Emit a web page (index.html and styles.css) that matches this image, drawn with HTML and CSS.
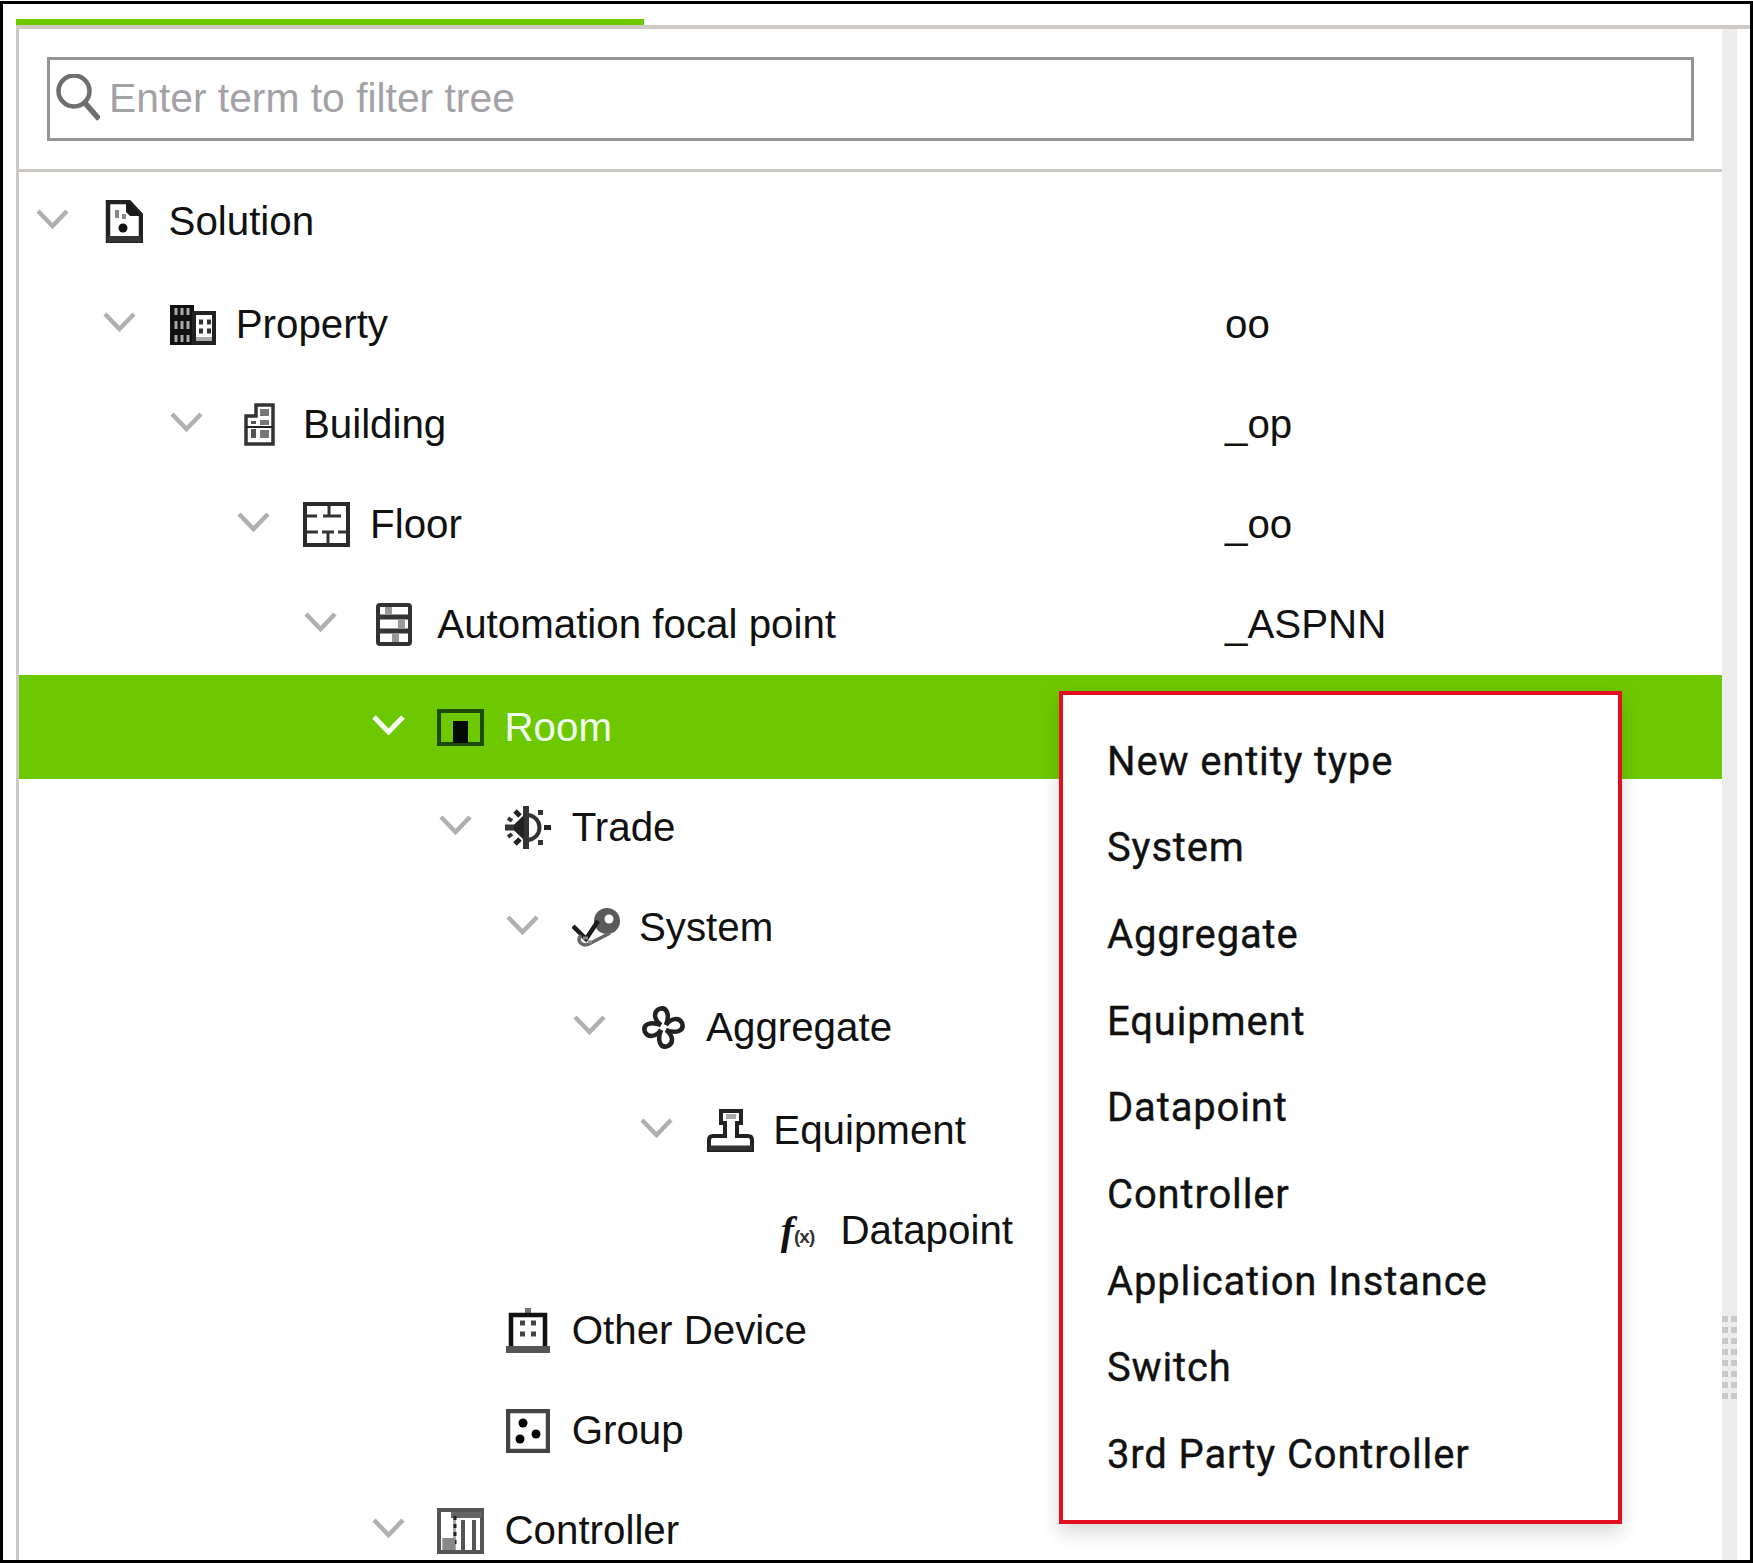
FILE: index.html
```html
<!DOCTYPE html>
<html lang="en">
<head>
<meta charset="utf-8">
<title>Tree</title>
<link rel="stylesheet" href="styles.css">
</head>
<body>
<div class="frame">
  <div class="tab"></div>
  <div class="panel">
    <div class="main">
      <div class="search">
        <svg class="search-icon" viewBox="0 0 46 47"><circle cx="20" cy="17" r="15.500" fill="none" stroke="#6e6e6e" stroke-width="4.500"/><path d="M31 29L45 45" stroke="#6e6e6e" stroke-width="5.500" fill="none"/></svg>
        <input class="search-input" type="text" placeholder="Enter term to filter tree">
      </div>
      <div class="tree">
        <div class="row">
          <div class="node l0"><span class="chev"><svg viewBox="0 0 33 20"><path d="M2 2L16.500 17L31 2"/></svg></span><span class="icon icon-left">
            <svg width="38" height="43" viewBox="0 0 38 43"><path d="M3 2H24L36 15V41H3Z" fill="#fff" stroke="#222" stroke-width="4.500"/><path d="M21 1L37 16H25L21 12Z" fill="#1a1a1a"/><rect x="10" y="10" width="4" height="8" fill="#888"/><rect x="17" y="14" width="4" height="5" fill="#888"/><circle cx="18" cy="28" r="4.500" fill="#111"/><rect x="2" y="36" width="34" height="6" fill="#333"/></svg>
          </span><span class="label">Solution</span></div>
          <span class="value"></span>
        </div>
        <div class="row">
          <div class="node l1"><span class="chev"><svg viewBox="0 0 33 20"><path d="M2 2L16.500 17L31 2"/></svg></span><span class="icon">
            <svg width="46" height="40" viewBox="0 0 46 40"><rect x="0" y="0" width="24" height="40" fill="#111"/><path d="M6 3V10M12 3V10M18 3V10M6 16V24M12 16V24M18 16V24M6 30V37M12 30V37M18 30V37" stroke="#aaa" stroke-width="3"/><rect x="24" y="8" width="20" height="30" fill="#fff" stroke="#222" stroke-width="4"/><path d="M29 17h4M37 17h4M29 26h4M37 26h4" stroke="#333" stroke-width="5"/><rect x="26" y="32" width="16" height="4" fill="#aaa"/></svg>
          </span><span class="label">Property</span></div>
          <span class="value">oo</span>
        </div>
        <div class="row">
          <div class="node l2"><span class="chev"><svg viewBox="0 0 33 20"><path d="M2 2L16.500 17L31 2"/></svg></span><span class="icon">
            <svg width="31" height="43" viewBox="0 0 31 43"><path d="M2 41V13H12V2H29V41Z" fill="#fff" stroke="#333" stroke-width="3.500"/><path d="M16 6h9v7h-9zM16 17h9v5h-9zM16 27h9v8h-9z" fill="#777"/><path d="M7 18h5v3h-5zM7 26h5v9h-5z" fill="#555"/><path d="M2 24H29" stroke="#222" stroke-width="2"/></svg>
          </span><span class="label">Building</span></div>
          <span class="value">_op</span>
        </div>
        <div class="row">
          <div class="node l3"><span class="chev"><svg viewBox="0 0 33 20"><path d="M2 2L16.500 17L31 2"/></svg></span><span class="icon icon-floor">
            <svg width="47" height="45" viewBox="0 0 47 45"><rect x="2" y="2" width="43" height="41" fill="#fff" stroke="#2a2a2a" stroke-width="4"/><path d="M4 14H14M20 14H38M26 4V14M4 30H15M19 30H31M35 30H44M25 30V42" fill="none" stroke="#333" stroke-width="3"/></svg>
          </span><span class="label">Floor</span></div>
          <span class="value">_oo</span>
        </div>
        <div class="row">
          <div class="node l4"><span class="chev"><svg viewBox="0 0 33 20"><path d="M2 2L16.500 17L31 2"/></svg></span><span class="icon">
            <svg width="36" height="43" viewBox="0 0 36 43"><rect x="2" y="2" width="32" height="39" rx="2" fill="#fff" stroke="#333" stroke-width="4"/><path d="M3 14H33M3 28H33" stroke="#333" stroke-width="5"/><rect x="9" y="4" width="7" height="7" fill="#999"/><rect x="22" y="17" width="7" height="8" fill="#999"/><rect x="16" y="31" width="7" height="8" fill="#999"/></svg>
          </span><span class="label">Automation focal point</span></div>
          <span class="value">_ASPNN</span>
        </div>
        <div class="row selected">
          <div class="node l5"><span class="chev"><svg viewBox="0 0 33 20"><path d="M2 2L16.500 17L31 2"/></svg></span><span class="icon icon-floor">
            <svg width="47" height="37" viewBox="0 0 47 37"><rect x="2" y="2" width="43" height="33" fill="none" stroke="#1c4a00" stroke-width="4"/><rect x="16" y="12" width="15" height="22" fill="#050a00"/></svg>
          </span><span class="label">Room</span></div>
          <span class="value"></span>
        </div>
        <div class="row after-selected">
          <div class="node l6"><span class="chev"><svg viewBox="0 0 33 20"><path d="M2 2L16.500 17L31 2"/></svg></span><span class="icon">
            <svg width="47" height="43" viewBox="0 0 47 43"><path d="M22 9A12.500 12.500 0 0 1 22 34" fill="none" stroke="#333" stroke-width="4"/><path d="M21 0V43" stroke="#333" stroke-width="6"/><path d="M19 9L6 21.500L19 34Z" fill="#222"/><path d="M0 21.500H9" stroke="#333" stroke-width="6"/><path d="M10 5L15 10M10 38L15 33" stroke="#222" stroke-width="5"/><path d="M3 12L7 15M3 31L7 28" stroke="#333" stroke-width="4"/><rect x="33" y="4" width="5" height="5" fill="#333"/><rect x="33" y="34" width="5" height="5" fill="#333"/><rect x="39" y="19" width="7" height="5" fill="#222"/></svg>
          </span><span class="label">Trade</span></div>
          <span class="value"></span>
        </div>
        <div class="row">
          <div class="node l7"><span class="chev"><svg viewBox="0 0 33 20"><path d="M2 2L16.500 17L31 2"/></svg></span><span class="icon">
            <svg width="48" height="39" viewBox="0 0 48 39"><circle cx="35" cy="13" r="13" fill="#5a5a5a"/><circle cx="37" cy="11" r="4.500" fill="#fff"/><path d="M1 18L14 31L26 13" fill="none" stroke="#1c1c1c" stroke-width="4.500"/><path d="M9 27C4 33 10 39 17 36L38 25" fill="none" stroke="#666" stroke-width="3.500"/><path d="M11 30h5M16 34h4" stroke="#888" stroke-width="3"/></svg>
          </span><span class="label">System</span></div>
          <span class="value"></span>
        </div>
        <div class="row">
          <div class="node l8"><span class="chev"><svg viewBox="0 0 33 20"><path d="M2 2L16.500 17L31 2"/></svg></span><span class="icon">
            <svg width="43" height="43" viewBox="0 0 43 43"><g fill="none" stroke="#222" stroke-width="4.500"><path d="M19 19C12 14 11 6 17 3C25 0 28 9 24 19"/><path d="M24 19C29 12 37 11 40 17C43 25 34 28 24 24"/><path d="M24 24C31 29 32 37 26 40C18 43 15 34 19 24"/><path d="M19 24C14 31 6 32 3 26C0 18 9 15 19 19"/></g></svg>
          </span><span class="label">Aggregate</span></div>
          <span class="value"></span>
        </div>
        <div class="row">
          <div class="node l9"><span class="chev"><svg viewBox="0 0 33 20"><path d="M2 2L16.500 17L31 2"/></svg></span><span class="icon">
            <svg width="47" height="43" viewBox="0 0 47 43"><path d="M18 14H14V2H34V14H30V27H41Q45 27 45 31V41H2V31Q2 27 6 27H18Z" fill="#fff" stroke="#222" stroke-width="4"/><path d="M2 39H45" stroke="#333" stroke-width="5"/><rect x="19" y="5" width="10" height="5" fill="#aaa"/></svg>
          </span><span class="label">Equipment</span></div>
          <span class="value"></span>
        </div>
        <div class="row">
          <div class="node l10"><span class="chev"></span><span class="icon fx"><span class="fx-f">f</span><span class="fx-x">(x)</span></span><span class="label">Datapoint</span></div>
          <span class="value"></span>
        </div>
        <div class="row">
          <div class="node l6"><span class="chev"></span><span class="icon icon-floor">
            <svg width="44" height="45" viewBox="0 0 44 45"><path d="M22 0V6" stroke="#777" stroke-width="6"/><path d="M5 44V7H39V44" fill="#fff" stroke="#111" stroke-width="4.500"/><rect x="0" y="38" width="44" height="7" fill="#555"/><path d="M14 15h5M25 15h5M14 26h5M25 26h5" stroke="#444" stroke-width="5"/></svg>
          </span><span class="label">Other Device</span></div>
          <span class="value"></span>
        </div>
        <div class="row">
          <div class="node l6"><span class="chev"></span><span class="icon icon-floor">
            <svg width="44" height="44" viewBox="0 0 44 44"><rect x="2" y="2" width="40" height="40" fill="#fff" stroke="#444" stroke-width="4.500"/><circle cx="17" cy="14" r="4.500" fill="#000"/><circle cx="30" cy="25" r="4.500" fill="#000"/><circle cx="14" cy="30" r="4.500" fill="#000"/></svg>
          </span><span class="label">Group</span></div>
          <span class="value"></span>
        </div>
        <div class="row">
          <div class="node l5"><span class="chev"><svg viewBox="0 0 33 20"><path d="M2 2L16.500 17L31 2"/></svg></span><span class="icon icon-floor">
            <svg width="47" height="46" viewBox="0 0 47 46"><rect x="2" y="2" width="43" height="42" fill="#fff" stroke="#555" stroke-width="4"/><path d="M14 4H44V10H14Z" fill="#666"/><path d="M16 10V30H5V42H19V10" fill="#aaa"/><path d="M18 8V36" stroke="#222" stroke-width="3" stroke-dasharray="4 4"/><path d="M26 12V42M37 12V42" stroke="#555" stroke-width="4"/><path d="M6 30h12v12H6z" fill="#888"/></svg>
          </span><span class="label">Controller</span></div>
          <span class="value"></span>
        </div>
      </div>
    </div>
    <div class="scrollbar">
      <div class="grip"><i></i><i></i><i></i><i></i><i></i><i></i><i></i><i></i><i></i><i></i><i></i><i></i><i></i><i></i><i></i><i></i></div>
    </div>
  </div>
  <ul class="menu">
    <li>New entity type</li>
    <li>System</li>
    <li>Aggregate</li>
    <li>Equipment</li>
    <li>Datapoint</li>
    <li>Controller</li>
    <li>Application Instance</li>
    <li>Switch</li>
    <li>3rd Party Controller</li>
  </ul>
</div>
</body>
</html>
```
FILE: styles.css
```css
* { box-sizing: border-box; }
html, body { margin: 0; padding: 0; background: #fff; }
body { padding-top: 1px; height: 1563px; overflow: hidden; font-family: "Liberation Sans", Arial, sans-serif; color: #111; }

.frame {
  position: relative;
  height: 1562px;
  border: 3px solid #000;
  padding: 15px 0 0 13px;
  background: #fff;
  overflow: hidden;
}
.tab { width: 628px; height: 6px; background: #6ec800; }
.panel {
  display: flex;
  height: 1536px;
  border-top: 4px solid #cdcac5;
  border-left: 3px solid #cdcac5;
}
.main { width: 1703px; flex: none; display: flex; flex-direction: column; }

.search {
  display: flex;
  align-items: center;
  height: 84px;
  margin: 28px 28px 28px 28px;
  border: 3px solid #949494;
  flex: none;
}
.search-icon { width: 46px; height: 47px; margin: 0 0 3px 4px; flex: none; }
.search-input {
  flex: 1;
  min-width: 0;
  height: 70px;
  border: 0;
  outline: 0;
  padding: 0 0 1px 9px;
  margin: 0;
  background: transparent;
  font: 40.800px "Liberation Sans", Arial, sans-serif;
  color: #111;
}
.search-input::placeholder { color: #a3a1a6; opacity: 1; }

.tree {
  flex: 1;
  border-top: 3px solid #cdcac5;
  display: grid;
  grid-template-rows: 103px 100px 100px 100px 100px 104px 99px 100px 103px 100px 100px 100px 100px 79px;
  overflow: hidden;
}
.row {
  display: grid;
  grid-template-columns: 1206px 1fr;
  padding-top: 27px;
  font-size: 40.300px;
  line-height: 45px;
}
.row.selected { background: #6ec800; padding-top: 30px; color: #effff0; }
.row.after-selected { padding-top: 26px; }
.node { display: flex; align-items: center; height: 45px; white-space: nowrap; }
.l0 { padding-left: 0; }
.l1 { padding-left: 67.2px; }
.l2 { padding-left: 134.4px; }
.l3 { padding-left: 201.6px; }
.l4 { padding-left: 268.8px; }
.l5 { padding-left: 336px; }
.l6 { padding-left: 403.2px; }
.l7 { padding-left: 470.4px; }
.l8 { padding-left: 537.6px; }
.l9 { padding-left: 604.8px; }
.l10 { padding-left: 672px; }

.chev { width: 66px; flex: none; display: flex; justify-content: center; margin-bottom: 5px; }
.chev svg { width: 33px; height: 20px; display: block; }
.chev path { fill: none; stroke: #b0b0b2; stroke-width: 4.500; }
.selected .chev path { stroke: #f4fff0; stroke-width: 5; }
.icon { width: 81px; margin-right: 2.500px; flex: none; display: flex; justify-content: center; align-items: center; }
.icon-left svg { margin-right: 4px; }
.icon-floor svg { margin-right: 2px; }
.icon svg { display: block; flex: none; }
.label { display: block; }
.value { display: block; }

.fx { font-family: "Liberation Serif", serif; color: #111; align-items: flex-end; }
.fx-f { font-size: 40px; line-height: 40px; font-style: italic; font-weight: 700; }
.fx-x { font-size: 19px; line-height: 28px; letter-spacing: -1px; font-family: "Liberation Sans", sans-serif; font-weight: 700; color: #333; }

.scrollbar { width: 15px; flex: none; background: #ededed; padding-top: 1287px; }
.grip { display: grid; grid-template-columns: 6px 6px; column-gap: 3px; row-gap: 5px; grid-auto-rows: 6px; }
.grip i { background: #c9c9c9; }

.menu {
  position: absolute;
  left: 1056px;
  top: 687px;
  width: 563px;
  height: 833px;
  margin: 0;
  padding: 23.500px 0 0 44px;
  list-style: none;
  background: #fff;
  border: 4px solid #e2101e;
  box-shadow: 0 8px 18px rgba(0, 0, 0, .16);
  font-family: Roboto, "Liberation Sans", sans-serif;
  font-size: 40px;
  font-weight: 400;
  letter-spacing: .85px;
  -webkit-text-stroke: .35px #111;
  line-height: 86.700px;
  color: #111;
}
```
